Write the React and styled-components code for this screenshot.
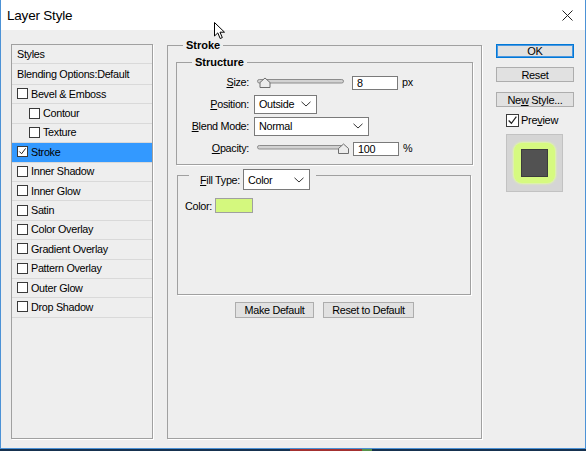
import styled, { createGlobalStyle } from "styled-components";

const GlobalStyle = createGlobalStyle`
  html, body {
    margin: 0;
    padding: 0;
  }
  body {
    width: 586px;
    height: 451px;
    overflow: hidden;
    font-family: "Liberation Sans", Arial, sans-serif;
    font-size: 10.8px;
    letter-spacing: -0.3px;
    color: #000;
  }
  * {
    box-sizing: border-box;
  }
`;

const Desktop = styled.div`
  position: relative;
  width: 586px;
  height: 451px;
  background: linear-gradient(
    90deg,
    #16314f 0 290px,
    #a33030 290px 362px,
    #58914a 362px 372px,
    #16314f 372px
  );
`;

const Window = styled.div`
  width: 586px;
  height: 449px;
  display: flex;
  flex-direction: column;
  background: #eeeeee;
  border: 1px solid #4c92d6;
  border-top: 0;
`;

const TitleBar = styled.div`
  flex: none;
  height: 30px;
  background: #fff;
  display: flex;
  align-items: center;
  justify-content: space-between;
  padding: 0 12px 0 6px;
`;

const Title = styled.div`
  font-size: 13.5px;
  letter-spacing: -0.2px;
`;

const Body = styled.div`
  flex: 1;
  display: flex;
  align-items: flex-start;
  gap: 14px;
  padding: 14px 0 0 10px;
`;

/* left list */
const StylesList = styled.ul`
  list-style: none;
  margin: 0;
  padding: 0;
  flex: none;
  width: 142px;
  height: 395px;
  border: 1px solid #a0a0a0;
  box-shadow: 1px 1px 0 #fff;
`;

const StyleItem = styled.li`
  height: ${(p) => p.$h || 19.4}px;
  display: flex;
  align-items: center;
  gap: 3px;
  padding: 0 0 1px ${(p) => (p.$indent ? 17 : 5)}px;
  border-bottom: 1px solid #d9d9d9;
  background: ${(p) => (p.$active ? "#3399ff" : "transparent")};
`;

const Box = styled.span`
  flex: none;
  width: ${(p) => p.$size || 11}px;
  height: ${(p) => p.$size || 11}px;
  border: 1px solid #3a3a3a;
  background: #fff;
  display: flex;
  align-items: center;
  justify-content: center;
`;

const CheckBox = ({ checked, size }) => (
  <Box $size={size}>
    {checked && (
      <svg width={size ? 11 : 9} height={size ? 11 : 9} viewBox="0 0 10 10">
        <polyline points="1.5,5 4,7.5 8.5,1.5" fill="none" stroke="#222" strokeWidth="1.1" />
      </svg>
    )}
  </Box>
);

/* main panel */
const Group = styled.fieldset`
  margin: 0;
  min-width: 0;
  border: 1px solid #a0a0a0;
  box-shadow: 1px 1px 0 #fff;
`;

const StrokeGroup = styled(Group)`
  flex: none;
  width: 315px;
  height: 400px;
  margin-top: -5px;
  padding: 4px 8px 0;
`;

const StructureGroup = styled(Group)`
  padding: 2px 0 5px;
`;

const FillGroup = styled(Group)`
  height: 126px;
  margin: 4px 2px 0 1px;
  padding: 17px 8px 0 7px;
`;

const Legend = styled.legend`
  margin-left: ${(p) => p.$offset}px;
  padding: 0 3px;
  font-weight: bold;
  font-size: 11px;
  line-height: 13px;
  letter-spacing: 0;
`;

const FillLegend = styled.legend`
  margin-left: 4px;
  padding: 0 6px 0 11px;
  height: 12px;
`;

const LegendRow = styled.div`
  display: flex;
  align-items: center;
  gap: 3px;
  height: 21px;
`;

const FieldRow = styled.div`
  height: 22px;
  display: flex;
  align-items: center;
`;

const FieldLabel = styled.span`
  width: 72px;
  margin-right: 5px;
  text-align: right;
`;

const NumBox = styled.div`
  width: 46px;
  height: 14px;
  margin-left: ${(p) => p.$ml}px;
  margin-top: 1px;
  border: 1px solid #7a7a7a;
  background: #fff;
  padding-left: 4px;
  line-height: 12px;
`;

const Unit = styled.span`
  margin-left: 4px;
`;

const SelectBox = styled.div`
  width: ${(p) => p.$w}px;
  height: ${(p) => p.$h || 19}px;
  border: 1px solid #7a7a7a;
  background: #fff;
  display: flex;
  align-items: center;
  justify-content: space-between;
  padding: 0 5px 0 4px;
`;

const Select = ({ value, w, h }) => (
  <SelectBox $w={w} $h={h}>
    <span>{value}</span>
    <svg width="10" height="6" viewBox="0 0 10 6">
      <polyline points="0.5,0.8 5,5 9.5,0.8" fill="none" stroke="#333" strokeWidth="1" />
    </svg>
  </SelectBox>
);

const Slider = ({ at }) => (
  <svg width="95" height="14" viewBox="0 0 95 14">
    <rect x="3.5" y="4.5" width="86" height="3.5" rx="1.75" fill="#d2d2d2" stroke="#8c8c8c" />
    <polygon
      points={`${at},3 ${at + 5},7.5 ${at + 5},12.5 ${at - 5},12.5 ${at - 5},7.5`}
      fill="#ececec"
      stroke="#6e6e6e"
      strokeLinejoin="round"
    />
  </svg>
);

const ColorRow = styled.div`
  display: flex;
  align-items: center;
  gap: 3px;
`;

const Swatch = styled.span`
  width: 38px;
  height: 15px;
  background: #d4f87e;
  border: 1px solid #a0a0a0;
`;

const ButtonRow = styled.div`
  margin-top: 7px;
  display: flex;
  justify-content: center;
  gap: 9px;
`;

const Button = styled.div`
  width: ${(p) => p.$w}px;
  height: ${(p) => p.$h || 16}px;
  background: #e1e1e1;
  border: 1px solid #adadad;
  display: flex;
  align-items: center;
  justify-content: center;
  ${(p) =>
    p.$primary &&
    `
    border-color: #0078d7;
    box-shadow: inset 0 0 0 1px #4a97e0;
  `}
`;

/* right column */
const SideColumn = styled.div`
  flex: none;
  width: 78px;
  display: flex;
  flex-direction: column;
`;

const SideButton = styled(Button)`
  margin-top: ${(p) => p.$mt || 0}px;
  font-size: 11px;
`;

const PreviewToggle = styled.div`
  margin: 6px 0 0 10px;
  height: 14px;
  display: flex;
  align-items: center;
  gap: 2px;
  font-size: 11px;
`;

const PreviewPane = styled.div`
  margin: 7px 0 0 10px;
  width: 57px;
  height: 58px;
  background: #d5d5d5;
  border: 1px solid #c2c2c2;
  display: flex;
  align-items: center;
  justify-content: center;
`;

const GlowStroke = styled.div`
  width: 41px;
  height: 40px;
  border-radius: 8px;
  background: #d6fa80;
  box-shadow: 0 0 2px 1px #e2fb9f;
  display: flex;
  align-items: center;
  justify-content: center;
`;

const Layer = styled.div`
  width: 27px;
  height: 28px;
  background: #525252;
  border: 1px solid #3c3c3c;
`;

const Cursor = styled.svg`
  position: absolute;
  left: 214px;
  top: 22px;
`;

const styleItems = [
  { name: "Bevel & Emboss" },
  { name: "Contour", indent: true },
  { name: "Texture", indent: true },
  { name: "Stroke", checked: true },
  { name: "Inner Shadow" },
  { name: "Inner Glow" },
  { name: "Satin" },
  { name: "Color Overlay" },
  { name: "Gradient Overlay" },
  { name: "Pattern Overlay" },
  { name: "Outer Glow" },
  { name: "Drop Shadow" },
];

export default function App() {
  return (
    <Desktop>
      <GlobalStyle />
      <Window>
        <TitleBar>
          <Title>Layer Style</Title>
          <svg width="11" height="11" viewBox="0 0 11 11">
            <path d="M0.5 0.5 L10.5 10.5 M10.5 0.5 L0.5 10.5" stroke="#222" strokeWidth="1" />
          </svg>
        </TitleBar>

        <Body>
          <StylesList>
            <StyleItem $h={19}>Styles</StyleItem>
            <StyleItem $h={21}>Blending Options:Default</StyleItem>
            {styleItems.map((it) => (
              <StyleItem key={it.name} $indent={it.indent} $active={it.checked}>
                <CheckBox checked={it.checked} />
                {it.name}
              </StyleItem>
            ))}
          </StylesList>

          <StrokeGroup>
            <Legend $offset={7}>Stroke</Legend>
            <StructureGroup>
              <Legend $offset={15}>Structure</Legend>
              <FieldRow>
                <FieldLabel>
                  <u>S</u>ize:
                </FieldLabel>
                <Slider at={11} />
                <NumBox $ml={3}>8</NumBox>
                <Unit>px</Unit>
              </FieldRow>
              <FieldRow>
                <FieldLabel>
                  <u>P</u>osition:
                </FieldLabel>
                <Select value="Outside" w={63} />
              </FieldRow>
              <FieldRow>
                <FieldLabel>
                  <u>B</u>lend Mode:
                </FieldLabel>
                <Select value="Normal" w={115} />
              </FieldRow>
              <FieldRow>
                <FieldLabel>
                  <u>O</u>pacity:
                </FieldLabel>
                <Slider at={89.5} />
                <NumBox $ml={4}>100</NumBox>
                <Unit>%</Unit>
              </FieldRow>
            </StructureGroup>

            <FillGroup>
              <FillLegend>
                <LegendRow>
                  <span>
                    <u>F</u>ill Type:
                  </span>
                  <Select value="Color" w={67} h={21} />
                </LegendRow>
              </FillLegend>
              <ColorRow>
                <span>Color:</span>
                <Swatch />
              </ColorRow>
            </FillGroup>

            <ButtonRow>
              <Button $w={79}>Make Default</Button>
              <Button $w={91}>Reset to Default</Button>
            </ButtonRow>
          </StrokeGroup>

          <SideColumn>
            <SideButton $w={78} $h={14} $primary>
              OK
            </SideButton>
            <SideButton $w={78} $h={15} $mt={9}>
              Reset
            </SideButton>
            <SideButton $w={78} $h={15} $mt={10}>
              Ne<u>w</u>&nbsp;Style...
            </SideButton>
            <PreviewToggle>
              <CheckBox checked size={13} />
              <span>
                Pre<u>v</u>iew
              </span>
            </PreviewToggle>
            <PreviewPane>
              <GlowStroke>
                <Layer />
              </GlowStroke>
            </PreviewPane>
          </SideColumn>
        </Body>
      </Window>

      <Cursor width="12" height="18" viewBox="0 0 12 18">
        <path
          d="M0.5 0.5 L0.5 14 L3.8 10.9 L6.2 16.5 L8.3 15.6 L6 10.2 L10.5 10.2 Z"
          fill="#fff"
          stroke="#000"
          strokeWidth="1"
          strokeLinejoin="round"
        />
      </Cursor>
    </Desktop>
  );
}
